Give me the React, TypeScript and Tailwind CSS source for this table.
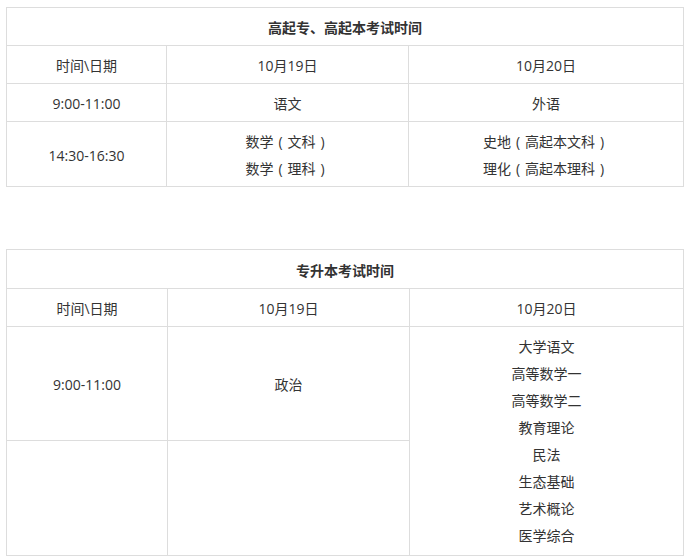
import React from "react";

const cell = "border border-[#dddddd] px-[5px] pt-[6px] pb-[4px] text-center align-middle leading-[27px]";

function P({ c }: { c: string }) {
  return <span className="inline-block w-[14px] text-center">{c}</span>;
}

function Paren({ a, b }: { a: string; b: string }) {
  return (
    <div>
      {a}
      <P c="(" />
      {b}
      <P c=")" />
    </div>
  );
}

function Table1() {
  return (
    <table className="w-[677px] table-fixed border-collapse">
      <colgroup>
        <col className="w-[160px]" />
        <col className="w-[242px]" />
        <col className="w-[275px]" />
      </colgroup>
      <tbody>
        <tr>
          <td colSpan={3} className={cell + " font-bold"}>高起专、高起本考试时间</td>
        </tr>
        <tr>
          <td className={cell}>时间\日期</td>
          <td className={cell}>10月19日</td>
          <td className={cell}>10月20日</td>
        </tr>
        <tr>
          <td className={cell}>9:00-11:00</td>
          <td className={cell}>语文</td>
          <td className={cell}>外语</td>
        </tr>
        <tr>
          <td className={cell}>14:30-16:30</td>
          <td className={cell}>
            <Paren a="数学" b="文科" />
            <Paren a="数学" b="理科" />
          </td>
          <td className={cell}>
            <Paren a="史地" b="高起本文科" />
            <Paren a="理化" b="高起本理科" />
          </td>
        </tr>
      </tbody>
    </table>
  );
}

function Table2() {
  const subjects = ["大学语文", "高等数学一", "高等数学二", "教育理论", "民法", "生态基础", "艺术概论", "医学综合"];
  return (
    <table className="w-[677px] table-fixed border-collapse">
      <colgroup>
        <col className="w-[161px]" />
        <col className="w-[242px]" />
        <col className="w-[274px]" />
      </colgroup>
      <tbody>
        <tr>
          <td colSpan={3} className={cell + " font-bold h-[39px]"}>专升本考试时间</td>
        </tr>
        <tr>
          <td className={cell}>时间\日期</td>
          <td className={cell}>10月19日</td>
          <td className={cell}>10月20日</td>
        </tr>
        <tr>
          <td className={cell + " h-[114px]"}>9:00-11:00</td>
          <td className={cell}>政治</td>
          <td rowSpan={2} className={cell + " pt-[6px] pb-[6px]"}>
            {subjects.map((s) => (
              <div key={s}>{s}</div>
            ))}
          </td>
        </tr>
        <tr>
          <td className={cell + " h-[115px]"}></td>
          <td className={cell}></td>
        </tr>
      </tbody>
    </table>
  );
}

export default function App() {
  return (
    <div
      className="w-[686px] h-[557px] bg-white text-[14px] text-[#333333] pl-[6px] pt-[7px]"
      style={{ fontFamily: '"Open Sans", "Noto Sans CJK SC", sans-serif' }}
    >
      <Table1 />
      <div className="h-[62px]" />
      <Table2 />
    </div>
  );
}
